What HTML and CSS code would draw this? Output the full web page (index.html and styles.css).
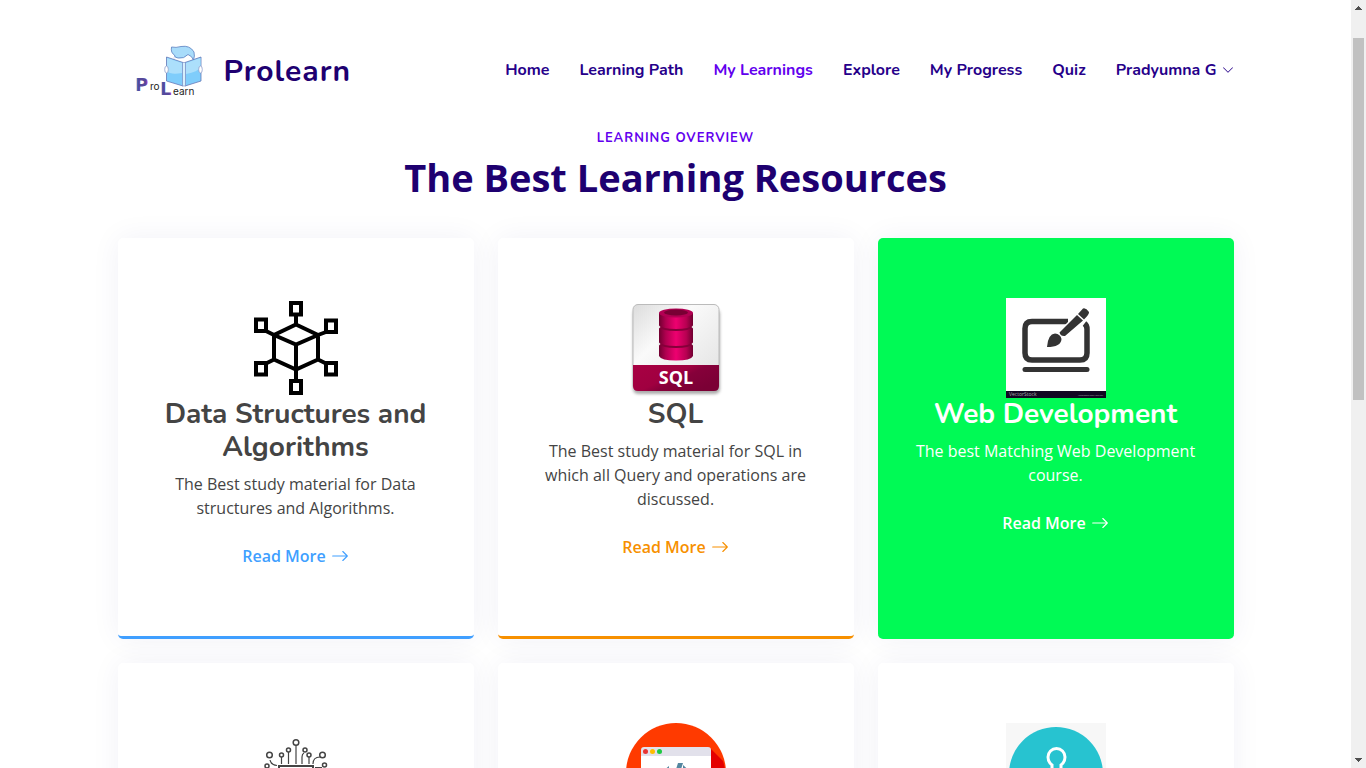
FILE: index.html
```html
<!DOCTYPE html>
<html lang="en">
<head>
<meta charset="utf-8">
<title>Prolearn</title>
<meta name="viewport" content="width=device-width, initial-scale=1">
<link rel="stylesheet" href="styles.css">
</head>
<body>
<svg class="sprite" aria-hidden="true">
  <symbol id="arrow" viewBox="0 0 16 16"><path fill-rule="evenodd" d="M1 8a.5.5 0 0 1 .5-.5h11.793l-3.147-3.146a.5.5 0 0 1 .708-.708l4 4a.5.5 0 0 1 0 .708l-4 4a.5.5 0 0 1-.708-.708L13.293 8.5H1.5A.5.5 0 0 1 1 8z"/></symbol>
</svg>
<div class="page">
  <header class="header container">
    <a class="logo" href="#">
      <svg class="logo-mark" viewBox="0 0 84 60" role="img" aria-label="Prolearn logo">
        <defs>
          <linearGradient id="lg1" x1="0" x2="1"><stop offset="0" stop-color="#35c4e0"/><stop offset=".25" stop-color="#56489b"/><stop offset=".8" stop-color="#56489b"/><stop offset="1" stop-color="#c23be0"/></linearGradient>
        </defs>
        <path d="M46 17 L60 12 L66 17 L63 22 L55 24 L46 20Z" fill="#fff" stroke="#c3cbe4" stroke-width=".5"/>
        <path d="M43.500 7 Q48 8 53 6.500 Q62 5 66 12 Q67 16 65.500 20 Q64 16 60 14.500 Q56 19 50 18 Q46 17.500 46.500 15 Q42.500 13 43.500 7Z" fill="#a8dcfa" stroke="#5a7fc0" stroke-width=".8"/>
        <path d="M38.500 17 L55 22.500 V46 L38.500 41Z" fill="#7fcdfb" stroke="#6678b8" stroke-width=".8"/>
        <path d="M73 17 L57 22.500 V46 L73 41Z" fill="#7fcdfb" stroke="#6678b8" stroke-width=".8"/>
        <path d="M39 18 L54 23 V33 Q42 35 39 31Z M72.500 18 L58 23 V34 Q70 32 72.500 27Z" fill="#acdffb"/>
        <path d="M54.500 22.500 H57.500 V46 H54.500Z" fill="#d8effc" stroke="#6678b8" stroke-width=".5"/>
        <ellipse cx="38.500" cy="29.500" rx="1.800" ry="3.500" fill="#fff" stroke="#8493c4" stroke-width=".7"/>
        <ellipse cx="72.500" cy="29.500" rx="1.800" ry="3.500" fill="#fff" stroke="#8493c4" stroke-width=".7"/>
        <text class="mark-big" x="7" y="51" fill="url(#lg1)">P</text>
        <text class="mark-small" x="22" y="50">ro</text>
        <text class="mark-big" x="32" y="55" fill="url(#lg1)">L</text>
        <text class="mark-small" x="45" y="55">earn</text>
      </svg>
      <span class="logo-name">Prolearn</span>
    </a>
    <nav class="nav" aria-label="Main">
      <a href="#">Home</a>
      <a href="#">Learning Path</a>
      <a class="active" href="#">My Learnings</a>
      <a href="#">Explore</a>
      <a href="#">My Progress</a>
      <a href="#">Quiz</a>
      <a class="user" href="#">Pradyumna G <svg class="chevron" viewBox="0 0 16 16" aria-hidden="true"><path fill-rule="evenodd" d="M1.646 4.646a.5.5 0 0 1 .708 0L8 10.293l5.646-5.647a.5.5 0 0 1 .708.708l-6 6a.5.5 0 0 1-.708 0l-6-6a.5.5 0 0 1 0-.708z"/></svg></a>
    </nav>
  </header>
  <main class="container">
    <div class="section-header">
      <h2>Learning Overview</h2>
      <p>The Best Learning Resources</p>
    </div>
    <div class="cards">
      <article class="card blue">
        <svg class="icon" viewBox="0 0 100 100" aria-hidden="true">
          <g fill="none" stroke="#000" stroke-width="4">
            <path d="M50 26.500 L72 37 V61.500 L50 71.500 L28 61.500 V37Z M28 37 L50 46.500 L72 37 M50 46.500 V82 M50 27 V18 M28 37 L20 33 M72 37 L80 34 M28 61.500 L20 65.500 M72 61.500 L80 65.500"/>
            <g fill="#fff"><path d="M45 5h10v11.500H45z M10 21.500h10v11.500H10z M80 22.500h10v11.500H80z M10 65h10v11.500H10z M80 65h10v11.500H80z M45 83h10v12H45z"/></g>
          </g>
        </svg>
        <h3>Data Structures and Algorithms</h3>
        <p>The Best study material for Data structures and Algorithms.</p>
        <a class="read-more" href="#">Read More <svg viewBox="0 0 16 16" aria-hidden="true"><use href="#arrow"/></svg></a>
      </article>
      <article class="card orange">
        <svg class="icon" viewBox="0 0 100 100" aria-hidden="true">
          <defs>
            <linearGradient id="tile" x1="0" y1="0" x2="1" y2="1"><stop offset="0" stop-color="#dcdcdc"/><stop offset=".35" stop-color="#fafafa"/><stop offset="1" stop-color="#e0e0e0"/></linearGradient>
            <linearGradient id="band" x1="0" x2="1" y1="0" y2=".6"><stop offset="0" stop-color="#a80043"/><stop offset=".5" stop-color="#a00040"/><stop offset=".65" stop-color="#86003a"/><stop offset="1" stop-color="#7b0035"/></linearGradient>
            <linearGradient id="drum" x1="0" x2="1"><stop offset="0" stop-color="#700030"/><stop offset=".2" stop-color="#b00050"/><stop offset=".5" stop-color="#ee0070"/><stop offset=".8" stop-color="#b80052"/><stop offset="1" stop-color="#700030"/></linearGradient>
            <filter id="soft" x="-20%" y="-20%" width="140%" height="140%"><feGaussianBlur stdDeviation="1.500"/></filter>
          </defs>
          <rect x="7" y="11" width="87" height="85" rx="5" fill="#888" opacity=".7" filter="url(#soft)"/>
          <rect x="7" y="6.500" width="86" height="86" rx="5" fill="url(#tile)" stroke="#bbb"/>
          <path d="M7 67H93V88Q93 93 88 93H12Q7 93 7 88Z" fill="url(#band)"/>
          <path d="M33 15 H67 V58 Q65 62.500 50 62.500 Q35 62.500 33 58Z" fill="url(#drum)"/>
          <path d="M33 44 Q36 48 50 48 Q64 48 67 44 V46 Q64 50 50 50 Q36 50 33 46Z M33 27 Q36 31 50 31 Q64 31 67 27 V29 Q64 33 50 33 Q36 33 33 29Z" fill="#85003a"/>
          <path d="M32.500 27l2 2-2 2z M67.500 27l-2 2 2 2z M32.500 44l2 2-2 2z M67.500 44l-2 2 2 2z" fill="#eee"/>
          <ellipse cx="50" cy="15" rx="17" ry="4.500" fill="#b20053"/>
          <ellipse cx="50" cy="14.500" rx="12" ry="3" fill="#790034"/>
          <text class="sql-label" x="50" y="86">SQL</text>
        </svg>
        <h3>SQL</h3>
        <p>The Best study material for SQL in which all Query and operations are discussed.</p>
        <a class="read-more" href="#">Read More <svg viewBox="0 0 16 16" aria-hidden="true"><use href="#arrow"/></svg></a>
      </article>
      <article class="card green">
        <svg class="icon" viewBox="0 0 100 100" aria-hidden="true">
          <path d="M0 0h100v100H0z" fill="#fff"/>
          <path d="M0 93h100v7H0z" fill="#120622"/>
          <path d="M62 23.500H26Q19 23.500 19 30.500V55Q19 62 26 62H74Q81 62 81 55V31Q81 27.500 78.500 25.500" fill="none" stroke="#333" stroke-width="5.500"/>
          <path d="M19 71.500H81" stroke="#333" stroke-width="5" stroke-linecap="round"/>
          <path d="M53.500 34.500 L71 17 L77 22.500 L59 38 Q54.500 38.500 53.500 34.500Z M72 16 L77 10.500 Q80 9.500 83 14 Q83.500 16 78 21.500Z M41 49 Q42 36 49 35.500 Q54.500 36 55.500 41 Q55 49 41 49Z" fill="#333" stroke="#fff" stroke-width="3" paint-order="stroke"/>
          <text class="credit" x="3" y="98">VectorStock</text>
          <text class="credit credit-url" x="72" y="98">VectorStock.com/12954301</text>
        </svg>
        <h3>Web Development</h3>
        <p>The best Matching Web Development course.</p>
        <a class="read-more" href="#">Read More <svg viewBox="0 0 16 16" aria-hidden="true"><use href="#arrow"/></svg></a>
      </article>
      <article class="card">
        <svg class="icon" viewBox="0 0 100 100" aria-hidden="true">
          <g fill="none" stroke="#444" stroke-width="1.500">
            <path d="M33 80V43H67V80" stroke-width="2"/>
            <path d="M50 22V41 M42.500 29V41 M35.500 34V41 M63 34V41 M56 41V34Q56 31 58 30 M67 41Q67 34 74 34 M24 37Q25 42 31 42.500 M22 46.500Q24 48 31 48 M69 44.500H76" stroke-width="1.200"/>
            <circle cx="50" cy="19.500" r="2.800"/><circle cx="42.500" cy="27" r="2"/><circle cx="59" cy="27" r="2"/><circle cx="35.500" cy="32" r="2"/><circle cx="63" cy="32" r="2"/><circle cx="23.500" cy="32" r="2.800"/><circle cx="76.500" cy="32" r="2.800"/><circle cx="21" cy="43" r="2"/><circle cx="78.500" cy="42" r="2"/>
          </g>
        </svg>
      </article>
      <article class="card">
        <svg class="icon" viewBox="0 0 100 100" aria-hidden="true">
          <circle cx="50" cy="50" r="50" fill="#ff3a00"/>
          <path d="M85 26 L97 38 Q104 60 90 80 L70 90Z" fill="#e40000"/>
          <path d="M15 33H85V80H15Z" fill="#fff"/>
          <path d="M15 33V27Q15 24 18 24H82Q85 24 85 27V33Z" fill="#e2e1eb"/>
          <circle cx="19.500" cy="28.500" r="2.500" fill="#e83535"/><circle cx="26.500" cy="28.500" r="2.500" fill="#ffbd00"/><circle cx="33.500" cy="28.500" r="2.500" fill="#1dc943"/>
          <path d="M52 40H57L48 68H43Z M43 43V48L35 54L43 59V64L30 54Z M57 42L70 54L57 64V59L65 54L57 47Z" fill="#5487a0"/>
        </svg>
      </article>
      <article class="card">
        <svg class="icon" viewBox="0 0 100 100" aria-hidden="true">
          <path d="M0 0h100v100H0z" fill="#f7f7f7"/>
          <circle cx="50" cy="51" r="47" fill="#27c3d0"/>
          <path d="M46 48V42Q42 39 42 34A8.500 8.500 0 0 1 59 34Q59 39 55 42V48" fill="none" stroke="#fff" stroke-width="3"/>
        </svg>
      </article>
    </div>
  </main>
</div>
<div class="scrollbar" aria-hidden="true">
  <svg class="scroll-arrow" viewBox="0 0 15 17"><path d="M7 6h1v1h1v1h1v1h1v1H4V9h1V8h1V7h1z" fill="#505050"/></svg>
  <div class="space-above"></div>
  <div class="thumb"></div>
  <div class="space-below"></div>
  <svg class="scroll-arrow" viewBox="0 0 15 17"><path d="M4 7h7v1h-1v1H9v1H8v1H7v-1H6V9H5V8H4z" fill="#505050"/></svg>
</div>
</body>
</html>
```
FILE: styles.css
```css
* { box-sizing: border-box; }

body {
  display: flex;
  height: 100vh;
  margin: 0;
  overflow: hidden;
  background: #fff;
  color: #444;
  font: 16px/24px "Open Sans", sans-serif;
}

a { text-decoration: none; }
h2, h3, p { margin: 0; }
.sprite { position: absolute; width: 0; height: 0; }
.page { flex: 1; min-width: 0; height: 100vh; overflow: hidden; }

.container {
  width: 100%;
  max-width: 1140px;
  margin: 0 auto;
  padding: 0 12px;
}

.header {
  display: flex;
  align-items: center;
  justify-content: space-between;
  padding-top: 40px;
}

.logo {
  display: flex;
  align-items: center;
  gap: 12px;
  padding-left: 10px;
}

.logo-mark { width: 84px; height: 60px; }

.logo-name {
  padding-top: 4px;
  color: #1e0070;
  font: 700 30px/56px Nunito, Lato, sans-serif;
  letter-spacing: 1px;
}

.mark-big { font: 700 18px "DejaVu Sans", sans-serif; }
.mark-small { fill: #222; font: 10px Inter, sans-serif; }

.nav { display: flex; gap: 30px; }

.nav a {
  color: #26008a;
  font: 700 16px/24px Nunito, Lato, sans-serif;
  white-space: nowrap;
}

.nav .active { color: #6200ee; }
.nav .user { display: flex; align-items: center; gap: 5px; }
.chevron { width: 12px; height: 12px; fill: currentColor; }

.section-header { padding: 28px 0 32px; text-align: center; }

.section-header h2 {
  color: #6200ee;
  font: 700 13px/20px Nunito, Lato, sans-serif;
  letter-spacing: 1px;
  text-transform: uppercase;
}

.section-header p {
  margin-top: 8px;
  color: #1e0070;
  font-size: 38px;
  font-weight: 700;
  line-height: 42px;
}

.cards {
  display: grid;
  grid-template-columns: repeat(3, minmax(0, 1fr));
  grid-auto-rows: 1fr;
  gap: 24px;
  padding-top: 8px;
}

.card {
  padding: 60px 30px;
  border-bottom: 3px solid #fff;
  border-radius: 5px;
  background: #fff;
  box-shadow: 0 0 30px rgba(30, 0, 112, 0.06);
  text-align: center;
}

.icon { display: block; width: 100px; height: 100px; margin: 0 auto; }

.card h3 {
  margin-bottom: 8px;
  font: 700 28px/33px Nunito, Lato, sans-serif;
}

.card p { margin-bottom: 16px; }

.read-more {
  display: inline-flex;
  align-items: center;
  gap: 5px;
  padding: 8px 20px;
  font-weight: 600;
}

.read-more svg { width: 18px; height: 18px; fill: currentColor; }

.blue { border-color: #409fff; }
.blue .read-more { color: #409fff; }
.orange { border-color: #f79000; }
.orange .read-more { color: #f79000; }

.green { border-color: #00fa55; background: #00fa55; color: #fff; }
.green .read-more { color: #fff; }

.sql-label { fill: #fff; font: 700 18px "Open Sans", sans-serif; text-anchor: middle; }
.credit { fill: #aaa; font: 5px "Open Sans", sans-serif; }
.credit-url { font-size: 2px; }

.scrollbar {
  display: flex;
  flex-direction: column;
  width: 15px;
  background: #f0f0f0;
}

.scroll-arrow { width: 15px; height: 17px; }
.space-above { flex: 21; }
.thumb { flex: 362; margin: 0 2px; background: #c1c1c1; }
.space-below { flex: 351; }
```
